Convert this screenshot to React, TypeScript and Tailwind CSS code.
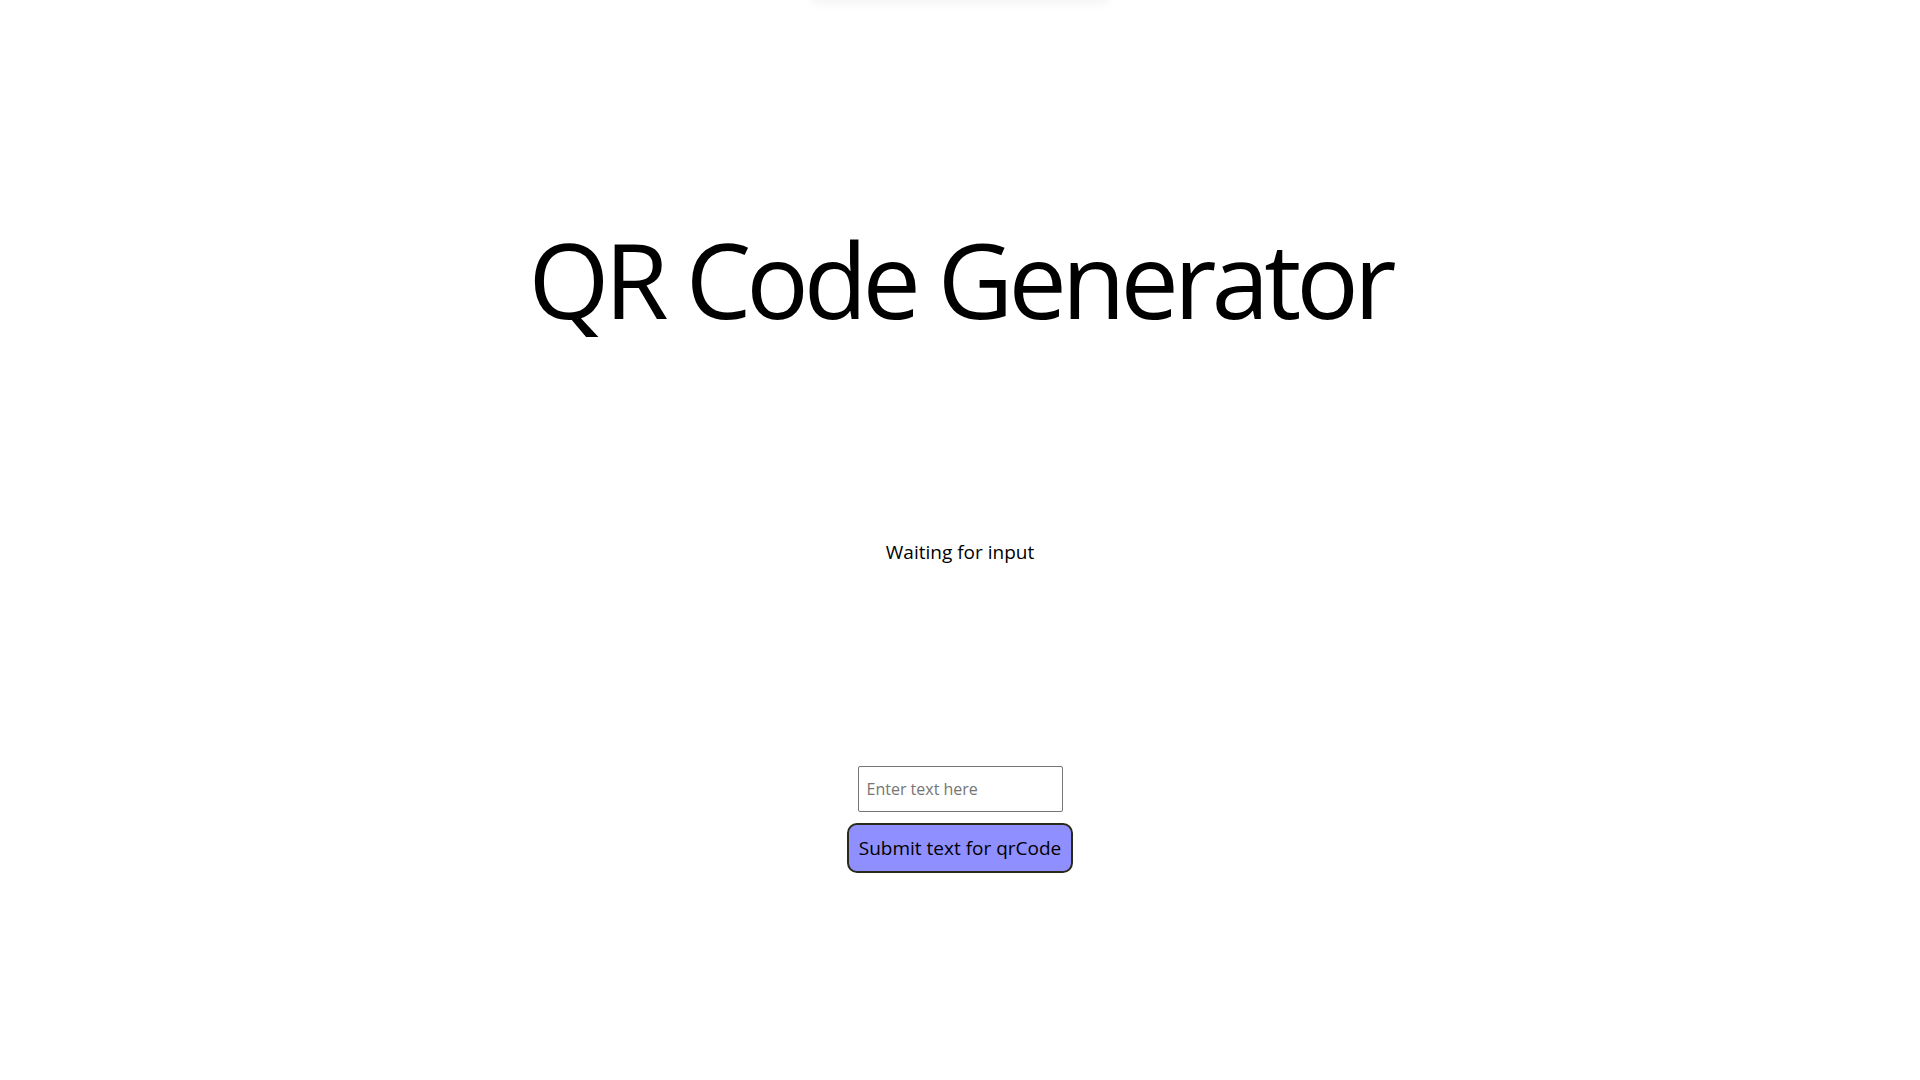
export default function App() {
  return (
    <div className="min-h-screen w-full bg-white flex flex-col items-center text-black" style={{ fontFamily: '"Open Sans", "Noto Sans", sans-serif' }}>
      <div className="w-[288px] h-[1px] -mt-[1px] shadow-[0_0_10px_4px_rgba(0,0,0,0.05)]" />
      <h1 className="mt-[219px] text-[104px] leading-[120px] font-normal tracking-[-5px]">QR Code Generator</h1>
      <p className="mt-[199px] text-[19px] leading-[28px]">Waiting for input</p>
      <div className="mt-[200px] flex flex-col items-center gap-[11px]">
        <input
          type="text"
          placeholder="Enter text here"
          className="w-[205px] h-[46px] border border-[#767676] rounded-[2px] px-[8px] text-[16px] placeholder:text-[#757575] outline-none"
        />
        <button className="w-[226px] h-[50px] bg-[#8f8fff] border-2 border-[#2a2a1a] rounded-[10px] text-[19px] leading-none">
          Submit text for qrCode
        </button>
      </div>
    </div>
  );
}
